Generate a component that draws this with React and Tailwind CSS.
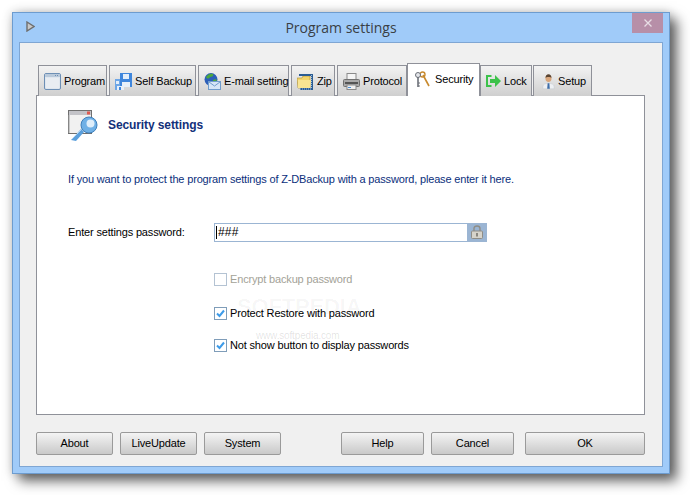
const ProgramIcon = () => (
  <svg className="shrink-0" width="17" height="17" viewBox="0 0 17 17">
    <rect x="0.5" y="0.5" width="16" height="16" rx="1.5" fill="#dfe6ee" stroke="#6d8fb5" />
    <rect x="1" y="1" width="15" height="3" fill="#b9c9da" />
    <rect x="11" y="2" width="1" height="1" fill="#6d8fb5" />
    <rect x="13" y="2" width="1" height="1" fill="#6d8fb5" />
    <rect x="2" y="5" width="13" height="10" fill="#e9edf2" />
  </svg>
);

const FloppyIcon = () => (
  <svg className="shrink-0" width="17" height="17" viewBox="0 0 17 17">
    <path d="M0 6h6v11H0z" fill="#6ea6e6" />
    <path d="M5 0h12v14H5z" fill="#3f86dc" />
    <rect x="8" y="1" width="6" height="5" fill="#e3eefa" />
    <rect x="7" y="9" width="8" height="5" fill="#e8f0f9" />
    <rect x="1" y="8" width="3" height="3" fill="#e3eefa" />
    <rect x="2" y="13" width="7" height="4" fill="#e8f0f9" />
    <rect x="4" y="14" width="2" height="3" fill="#3f86dc" />
  </svg>
);

const MailIcon = () => (
  <svg className="shrink-0" width="17" height="17" viewBox="0 0 17 17">
    <circle cx="7" cy="6.5" r="6.5" fill="#2c5fb8" />
    <path d="M2 4c2-3 5-4 7-3 1 2-1 3-3 3-1 2-3 2-4 0z" fill="#4da83a" />
    <path d="M9 7l3-1 1 3-4 1z" fill="#4da83a" />
    <rect x="4.5" y="8.5" width="12" height="8" fill="#d6e6f7" stroke="#6f9ccc" />
    <path d="M5 9l5.5 4L16 9" fill="none" stroke="#6f9ccc" />
  </svg>
);

const ZipIcon = () => (
  <svg className="shrink-0" width="17" height="17" viewBox="0 0 17 17">
    <path d="M0 5h5l1-2h7v12H1z" fill="#f2d46a" stroke="#a88a2c" strokeWidth="0.6" />
    <path d="M1 7h13l-1 8H1z" fill="#f9e592" />
    <path d="M2 1h12v2H2zM14 1h2v15h-2zM3 15h13v2H3z" fill="#2b5c92" />
    <path d="M14.5 2v14" stroke="#9dc0e4" strokeDasharray="1 1" />
    <path d="M3 16h12" stroke="#9dc0e4" strokeDasharray="1 1" />
  </svg>
);

const PrinterIcon = () => (
  <svg className="shrink-0" width="17" height="17" viewBox="0 0 17 17">
    <rect x="4" y="0.5" width="9" height="6" fill="#f4f4f4" stroke="#8a8a8a" />
    <rect x="0.5" y="6.5" width="16" height="7" rx="1" fill="#a9a9a9" stroke="#707070" />
    <rect x="2" y="9" width="13" height="2" fill="#555" />
    <rect x="4" y="12" width="9" height="4.5" fill="#f0f0f0" stroke="#8a8a8a" />
    <rect x="5" y="14" width="3" height="1" fill="#4a90d9" />
  </svg>
);

const KeysIcon = () => (
  <svg className="shrink-0" width="16" height="17" viewBox="0 0 16 17">
    <path d="M8 4l6 11" fill="none" stroke="#c88a2e" strokeWidth="1.6" />
    <circle cx="7.5" cy="3.5" r="2.5" fill="none" stroke="#c88a2e" strokeWidth="1.4" />
    <circle cx="3" cy="4" r="2.5" fill="#e4e6ea" stroke="#6c7078" />
    <path d="M3 6v10" stroke="#6c7078" strokeWidth="1.6" />
    <path d="M3 12h2M3 15h2" stroke="#6c7078" />
  </svg>
);

const ArrowIcon = () => (
  <svg className="shrink-0" width="15" height="12" viewBox="0 0 15 12">
    <path d="M5.5 1H1v10h4.5" fill="none" stroke="#3cc24a" strokeWidth="2" />
    <path d="M4 4h5V0l6 6-6 6V8H4z" fill="#3cc24a" />
  </svg>
);

const PersonIcon = () => (
  <svg className="ml-[3px] shrink-0" width="13" height="17" viewBox="0 0 15 17">
    <path d="M1 17v-3c0-2 3-3.500 6.500-3.500S14 12 14 14v3z" fill="#eef0f3" stroke="#c4c8cf" strokeWidth="0.6" />
    <path d="M6.500 10.500h2L9 17H6z" fill="#3d6ca8" />
    <ellipse cx="7.500" cy="5" rx="3.500" ry="4" fill="#d9a67c" />
    <path d="M4 4.500C4 1.500 5.500 0 7.500 0S11 1.500 11 4.500C10 3 5 3 4 4.500z" fill="#5a4330" />
  </svg>
);

const SecurityIcon = () => (
  <svg className="shrink-0" width="31" height="31" viewBox="0 0 31 31">
    <rect x="0.500" y="0.500" width="23" height="23" fill="#f1f1f1" stroke="#6f6f6f" />
    <rect x="1" y="1" width="22" height="4" fill="#c3c3c8" />
    <rect x="19" y="1.500" width="3" height="3" fill="#e0584f" />
    <path d="M1 23V5" stroke="#a0a0a0" />
    <path d="M3 30l10-11 3 3-8 9z" fill="#5a9fdc" />
    <circle cx="21" cy="15" r="8" fill="#6fb0e6" stroke="#3f7fba" />
    <circle cx="22.500" cy="13.500" r="4" fill="#dfeefa" />
    <path d="M4 29l9-9" stroke="#a9d2f3" />
  </svg>
);

const LockIcon = () => (
  <svg className="shrink-0" width="12" height="14" viewBox="0 0 12 14">
    <path d="M3 6V3.500C3 1.800 4.300 1 6 1s3 .8 3 2.500V6" fill="none" stroke="#8f8d86" strokeWidth="1.4" />
    <rect x="0.500" y="6" width="11" height="7.500" rx="1" fill="#d6d3ca" stroke="#8f8d86" />
    <rect x="5" y="8" width="2" height="3.500" fill="#8a877f" />
  </svg>
);

const CheckBox = ({ checked, disabled }) => (
  <span
    className={`flex h-[13px] w-[13px] shrink-0 items-center justify-center border ${
      disabled ? "border-[#b4c3d3] bg-white" : "border-[#7f9db9] bg-white"
    }`}
  >
    {checked && (
      <svg width="9" height="9" viewBox="0 0 9 9">
        <path d="M1 4.500l2.500 2.500L8 1.500" fill="none" stroke="#3d9be9" strokeWidth="2" />
      </svg>
    )}
  </span>
);

const tabs = [
  { label: "Program", width: "w-[69px]", icon: <ProgramIcon /> },
  { label: "Self Backup", width: "w-[87px]", icon: <FloppyIcon /> },
  { label: "E-mail setting", width: "w-[91px]", icon: <MailIcon /> },
  { label: "Zip", width: "w-[44px]", icon: <ZipIcon /> },
  { label: "Protocol", width: "w-[70px]", icon: <PrinterIcon /> },
];

const tabsAfter = [
  { label: "Lock", width: "w-[52px]", icon: <ArrowIcon /> },
  { label: "Setup", width: "w-[59px]", icon: <PersonIcon /> },
];

const Tab = ({ label, width, icon }) => (
  <div
    className={`flex h-[31px] ${width} items-center gap-[3px] border border-b-0 border-[#8f9199] bg-gradient-to-b from-[#f3f3f3] to-[#cfcfcf] pl-[5px] whitespace-nowrap`}
  >
    {icon}
    <span className="pt-px">{label}</span>
  </div>
);

const Btn = ({ label, width }) => (
  <button
    className={`h-[23px] ${width} rounded-[2px] border border-[#9a9a9a] bg-gradient-to-b from-[#f4f4f4] to-[#c9c9c9] text-center`}
  >
    {label}
  </button>
);

export default function App() {
  return (
    <div className="h-[495px] w-[690px] overflow-hidden bg-white pt-[12px] pl-[12px] font-['Liberation_Sans',sans-serif] text-[11px] tracking-[-0.16px] text-black">
      <div className="flex h-[462px] w-[658px] flex-col border border-[#6d9ccf] bg-[#a0cbf9] px-[6px] pb-[6px] shadow-[7px_7px_12px_rgba(0,0,0,0.6),0_0_10px_rgba(0,0,0,0.2)]">
        {/* title bar */}
        <div className="relative flex h-[29px] shrink-0 items-center justify-center">
          <svg className="absolute top-[8px] left-[7px]" width="9" height="11" viewBox="0 0 9 11">
            <path d="M1 1l7 4.500L1 10z" fill="#c8c8c8" stroke="#6e6e6e" strokeWidth="1.400" />
          </svg>
          <span className="font-['Open_Sans',sans-serif] text-[14px] tracking-normal text-[#3a3f45]">Program settings</span>
          <div className="absolute top-0 right-0 flex h-[20px] w-[31px] items-center justify-center bg-[#b78fa8]">
            <svg width="8" height="8" viewBox="0 0 8 8">
              <path d="M0.500 0.500l7 7M7.500 0.500l-7 7" stroke="#e8dde4" strokeWidth="1.300" />
            </svg>
          </div>
        </div>

        {/* dialog body */}
        <div className="flex flex-1 flex-col border border-[#7fa6d3] bg-[#f0f0f0] px-[16px] pt-[20px]">
          <div className="relative z-10 -mb-px flex h-[33px] items-end pl-[2px]">
            <div className="flex gap-[2px]">
              {tabs.map((t) => (
                <Tab key={t.label} {...t} />
              ))}
            </div>
            <div className="flex h-[33px] w-[73px] items-center gap-[4px] border border-b-0 border-[#8f9199] bg-white pb-[1px] pl-[7px]">
              <KeysIcon />
              <span>Security</span>
            </div>
            <div className="flex gap-[1px]">
              {tabsAfter.map((t) => (
                <Tab key={t.label} {...t} />
              ))}
            </div>
          </div>

          <div className="relative h-[320px] w-[609px] border border-[#8f9199] bg-white pt-[14px] pl-[31px]">
            <div className="flex items-center gap-[9px]">
              <SecurityIcon />
              <span className="pb-[2px] text-[12px] font-bold tracking-[-0.1px] text-[#12307a]">Security settings</span>
            </div>
            <p className="mt-[30px] text-[#0b2f7c]">
              If you want to protect the program settings of Z-DBackup with a password, please enter it here.
            </p>
            <div className="mt-[35px] flex items-center">
              <span className="w-[146px]">Enter settings password:</span>
              <div className="flex h-[19px] w-[273px] border border-[#9bb5d3] bg-white">
                <span className="flex flex-1 items-center pl-[1px] leading-[17px]">
                  <span className="mr-px h-[13px] w-px bg-black" />
                  <span className="text-[12px] tracking-[0.2px]">###</span>
                </span>
                <span className="flex w-[19px] items-center justify-center bg-[#9bb5d3]">
                  <LockIcon />
                </span>
              </div>
            </div>
            <div className="mt-[31px] ml-[146px] flex flex-col gap-[20px]">
              <label className="flex h-[14px] items-center gap-[3px] text-[#a3a297]">
                <CheckBox disabled />
                Encrypt backup password
              </label>
              <label className="flex h-[14px] items-center gap-[3px]">
                <CheckBox checked />
                Protect Restore with password
              </label>
              <label className="-mt-[2px] flex h-[14px] items-center gap-[3px]">
                <CheckBox checked />
                Not show button to display passwords
              </label>
            </div>
            {/* softpedia watermark */}
            <div className="absolute top-[200px] left-[200px] text-[22px] leading-none font-bold text-black/[0.04]">SOFTPEDIA</div>
            <div className="absolute top-[235px] left-[219px] text-[10px] leading-none text-black/[0.12]">www.softpedia.com</div>
          </div>

          <div className="mt-[17px] flex w-[609px] justify-between">
            <div className="flex gap-[7px]">
              <Btn label="About" width="w-[77px]" />
              <Btn label="LiveUpdate" width="w-[77px]" />
              <Btn label="System" width="w-[77px]" />
            </div>
            <div className="flex gap-[7px]">
              <Btn label="Help" width="w-[83px]" />
              <Btn label="Cancel" width="w-[83px]" />
              <Btn label="OK" width="ml-[4px] w-[120px]" />
            </div>
          </div>
        </div>
      </div>
    </div>
  );
}
